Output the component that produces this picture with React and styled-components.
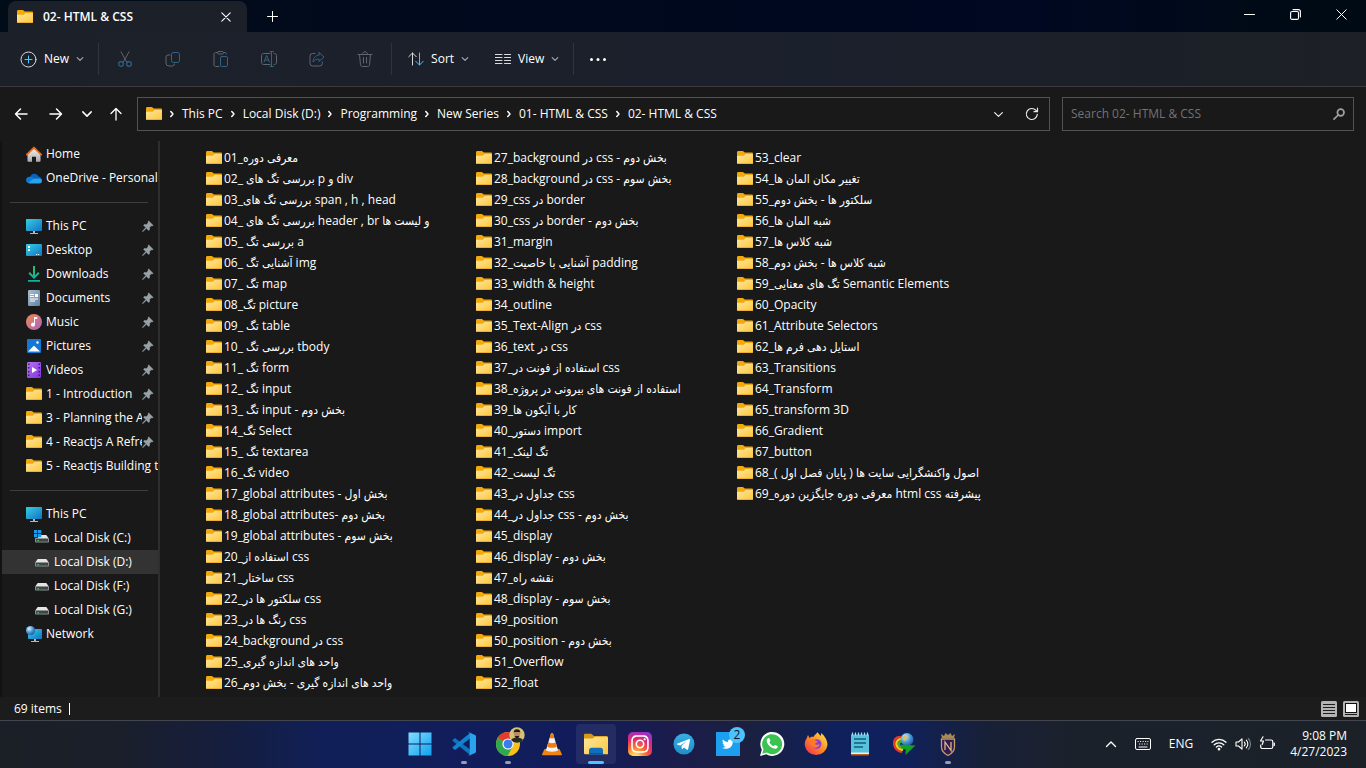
import React from 'react';
import styled, { createGlobalStyle, css } from 'styled-components';
import { FaTwitter, FaInstagram } from 'react-icons/fa';

const GlobalStyle = createGlobalStyle`
  *, *::before, *::after { box-sizing: border-box; }
  body {
    margin: 0;
    background: #191919;
    color: #ffffff;
    font-family: 'Open Sans', 'Noto Sans', 'DejaVu Sans Condensed', 'DejaVu Sans', sans-serif;
    font-size: 12px;
    line-height: 16px;
  }
  button, input { font: inherit; color: inherit; }
  svg { display: block; flex: none; }
`;

/* ---------- layout ---------- */

const Desktop = styled.div`
  display: flex;
  flex-direction: column;
  height: 100vh;
  min-height: 640px;
  overflow: hidden;
`;

const plainButton = css`
  display: flex;
  align-items: center;
  border: 0;
  padding: 0;
  background: none;
  cursor: default;
`;

const TitleBar = styled.header`
  display: flex;
  flex: none;
  height: 32px;
  padding-left: 8px;
  background: linear-gradient(90deg, #000c18 0%, #000a1c 25%, #00081f 55%, #000822 75%, #000a18 90%, #000a14 100%);
`;

const Tab = styled.div`
  display: flex;
  align-items: center;
  width: 239px;
  margin-top: 1px;
  padding: 0 16px 0 9px;
  border-radius: 8px 8px 0 0;
  background: #1c2129;
`;

const TabTitle = styled.span`
  flex: 1;
  margin-left: 10px;
  font-weight: 600;
`;

const IconButton = styled.button`
  ${plainButton}
  justify-content: center;
  width: ${(p) => p.$w || 40}px;
  height: ${(p) => p.$h || 32}px;
  flex: none;
`;

const CaptionButtons = styled.div`
  display: flex;
  margin-left: auto;
  padding-right: 2px;
`;

const Toolbar = styled.div`
  display: flex;
  flex: none;
  align-items: center;
  height: 55px;
  border-bottom: 1px solid #3b393d;
  background: linear-gradient(90deg, #1c2129 0%, #1b202b 35%, #1b202d 60%, #1b2029 80%, #1d2026 100%);
`;

const ToolGroup = styled.div`
  display: flex;
  align-items: center;
  gap: ${(p) => p.$gap || 0}px;
  padding: ${(p) => p.$pad};
  height: 32px;
  border-right: ${(p) => (p.$last ? '0' : '1px solid #30343b')};
`;

const ToolButton = styled.button`
  ${plainButton}
  gap: 7px;
  height: 32px;
  font-weight: 500;
`;

const NavRow = styled.div`
  display: flex;
  flex: none;
  align-items: center;
  height: 54px;
  padding: 0 12px 0 4px;
`;

const AddressBox = styled.div`
  display: flex;
  flex: 1;
  align-items: center;
  min-width: 0;
  height: 34px;
  margin: 0 12px 0 5px;
  padding-left: 8px;
  border: 1px solid #535353;
`;

const Crumbs = styled.nav`
  display: flex;
  flex: 1;
  align-items: center;
  min-width: 0;
  overflow: hidden;
  white-space: nowrap;
`;

const CrumbButton = styled.button`
  ${plainButton}
  flex: none;
`;

const CrumbArrow = styled.span`
  display: flex;
  flex: none;
  justify-content: center;
  width: 20px;
`;

const SearchBox = styled.label`
  display: flex;
  align-items: center;
  width: 292px;
  height: 34px;
  padding: 0 7px 0 8px;
  border: 1px solid #535353;
`;

const SearchInput = styled.input`
  flex: 1;
  min-width: 0;
  padding: 0;
  border: 0;
  outline: 0;
  background: none;
  &::placeholder { color: #737373; opacity: 1; }
`;

const Body = styled.div`
  display: flex;
  flex: 1;
  min-height: 0;
`;

const Sidebar = styled.nav`
  flex: none;
  width: 160px;
  padding-top: 1px;
  border-left: 2px solid #121212;
  border-right: 2px solid #2e2e2e;
  overflow: hidden;
`;

const SideLink = styled.a`
  display: flex;
  align-items: center;
  height: 24px;
  padding-left: ${(p) => (p.$nested ? 32 : 24)}px;
  color: inherit;
  text-decoration: none;
  background: ${(p) => (p.$selected ? '#333333' : 'transparent')};
`;

const SideLabel = styled.span`
  flex: 1;
  min-width: 0;
  margin-left: 4px;
  overflow: hidden;
  white-space: nowrap;
`;

const PinSlot = styled.span`
  display: flex;
  flex: none;
  width: 16px;
`;

const SideRule = styled.hr`
  height: 1px;
  margin: 12px 10px 11px 8px;
  border: 0;
  background: #3d3d3d;
`;

const FileList = styled.ul`
  display: grid;
  grid-auto-flow: column;
  grid-template-rows: repeat(26, 21px);
  grid-template-columns: 270px 261px auto;
  justify-content: start;
  flex: 1;
  margin: 0;
  padding: 6px 0 0 46px;
  list-style: none;
  overflow: hidden;
`;

const FileLink = styled.a`
  display: flex;
  align-items: center;
  gap: 2px;
  height: 21px;
  color: inherit;
  text-decoration: none;
  white-space: nowrap;
`;

const StatusBar = styled.footer`
  display: flex;
  flex: none;
  align-items: center;
  height: 23px;
  padding: 0 4px 0 14px;
  background: #1c1c1c;
`;

const StatusText = styled.span`
  padding-right: 7px;
`;

const StatusMark = styled.span`
  width: 1px;
  height: 12px;
  margin-right: auto;
  background: #ffffff;
`;

const Taskbar = styled.div`
  display: grid;
  flex: none;
  grid-template-columns: 1fr auto 1fr;
  align-items: center;
  height: 48px;
  padding: 0 0 2px 2px;
  border-top: 1px solid #43454f;
  background: linear-gradient(90deg, #1b2026 0%, #1a1f2b 9%, #151e40 17%, #101f58 24%, #121c5c 42%, #1b1c4c 49%, #1a2040 55%, #10205c 61%, #10205c 66%, #182038 72%, #1b212c 78%, #1c2128 100%);
`;

const Apps = styled.div`
  grid-column: 2;
  display: flex;
  gap: 4px;
`;

const AppButton = styled.button`
  ${plainButton}
  position: relative;
  justify-content: center;
  width: 40px;
  height: 40px;
  border-radius: 4px;
  background: ${(p) => (p.$state === 'active' ? 'rgba(255,255,255,0.07)' : 'none')};
  &::after {
    content: '';
    position: absolute;
    bottom: 0;
    left: 50%;
    transform: translateX(-50%);
    width: ${(p) => ({ active: 16, open: 6 })[p.$state] || 0}px;
    height: 3px;
    border-radius: 2px;
    background: ${(p) => (p.$state === 'active' ? '#4cc2ff' : '#9a9bb0')};
  }
`;

const Tile = styled.span`
  display: flex;
  align-items: center;
  justify-content: center;
  width: 24px;
  height: 24px;
  border-radius: ${(p) => p.$radius || 0}px;
  background: ${(p) => p.$bg};
  color: #ffffff;
`;

const Badge = styled.span`
  position: absolute;
  top: 3px;
  left: 21px;
  width: 16px;
  height: 16px;
  border-radius: 50%;
  background: #4cc2ff;
  color: #101820;
  text-align: center;
`;

const Tray = styled.div`
  display: flex;
  align-items: center;
  justify-content: flex-end;
  padding-right: 19px;
`;

const TrayText = styled.button`
  ${plainButton}
  justify-content: center;
  width: 40px;
  margin: 0 6px 0 2px;
`;

const Clock = styled.time`
  width: 68px;
  text-align: right;
  white-space: nowrap;
`;

/* ---------- small glyphs ---------- */

const Stroke = ({ size = 16, box = 16, color = '#fff', w = 1, children }) => (
  <svg width={size} height={size} viewBox={`0 0 ${box} ${box}`} fill="none" stroke={color} strokeWidth={w} strokeLinecap="round" strokeLinejoin="round" aria-hidden="true">
    {children}
  </svg>
);

const Caret = ({ color = '#a4a6aa', size = 8, w = 1.2 }) => (
  <Stroke size={size} box={8} color={color} w={w}><path d="M1.2 2.6 4 5.4l2.8-2.8" /></Stroke>
);

const CrumbCaret = () => (
  <Stroke size={8} box={8} w={1.5}><path d="M2.8 1.6 5 4 2.8 6.4" /></Stroke>
);

const FolderIcon = () => (
  <svg width="16" height="16" viewBox="0 0 16 16" aria-hidden="true">
    <path d="M0 2.4C0 1.6.6 1 1.3 1h4.2c.4 0 .7.1 1 .4L7.9 2.600H14.800c.7 0 1.200.5 1.200 1.200V8H0z" fill="#f3a80c" />
    <path d="M0 5.800h6.100c.4 0 .7-.1 1-.4l1.200-1.200c.2-.2.5-.3.8-.3H15c.6 0 1 .4 1 1v8c0 .7-.5 1.100-1.100 1.100H1.100C.5 14 0 13.600 0 12.900z" fill="url(#folderFront)" />
    <path d="M.1 13.200h15.800c-.2.500-.5.800-1 .8H1.100c-.5 0-.9-.3-1-.8z" fill="#e5a52c" />
  </svg>
);

const HiddenSvg = styled.svg`
  position: absolute;
  width: 0;
  height: 0;
`;

const Defs = () => (
  <HiddenSvg aria-hidden="true">
    <defs>
      <linearGradient id="folderFront" x1="0" y1="0" x2="1" y2="1"><stop offset="0" stopColor="#ffe79f" /><stop offset="1" stopColor="#fdc63a" /></linearGradient>
      <linearGradient id="screen" x1="0" y1="0" x2="1" y2="1"><stop offset="0" stopColor="#35cfe0" /><stop offset="1" stopColor="#1173c8" /></linearGradient>
      <linearGradient id="wall" x1="0" y1="0" x2="0" y2="1"><stop offset="0" stopColor="#f0f0f0" /><stop offset="1" stopColor="#a9a9a9" /></linearGradient>
      <linearGradient id="music" x1="0" y1="0" x2="1" y2="1"><stop offset="0" stopColor="#f28b4b" /><stop offset="1" stopColor="#a661c4" /></linearGradient>
      <linearGradient id="doc" x1="0" y1="0" x2="1" y2="1"><stop offset="0" stopColor="#a9bccf" /><stop offset="1" stopColor="#6583a5" /></linearGradient>
      <linearGradient id="down" x1="0" y1="0" x2="0" y2="1"><stop offset="0" stopColor="#2ebd72" /><stop offset="1" stopColor="#13ad9d" /></linearGradient>
      <linearGradient id="video" x1="0" y1="0" x2="1" y2="1"><stop offset="0" stopColor="#b773ee" /><stop offset="1" stopColor="#8133e0" /></linearGradient>
      <linearGradient id="win" x1="0" y1="0" x2="1" y2="1"><stop offset="0" stopColor="#84dcff" /><stop offset="1" stopColor="#0ea2ef" /></linearGradient>
      <linearGradient id="fox" x1="1" y1="0" x2="0" y2="1"><stop offset="0" stopColor="#fff04a" /><stop offset=".45" stopColor="#ff9028" /><stop offset="1" stopColor="#f5234f" /></linearGradient>
      <linearGradient id="tele" x1="0" y1="0" x2="0" y2="1"><stop offset="0" stopColor="#37aee2" /><stop offset="1" stopColor="#1e8fc9" /></linearGradient>
      <radialGradient id="globe" cx=".35" cy=".3" r=".8"><stop offset="0" stopColor="#d6f0ff" /><stop offset=".5" stopColor="#4c9cd8" /><stop offset="1" stopColor="#1b4b96" /></radialGradient>
    </defs>
  </HiddenSvg>
);

const Box = ({ children, size = 16, box = 16 }) => (
  <svg width={size} height={size} viewBox={`0 0 ${box} ${box}`} aria-hidden="true">{children}</svg>
);

const Monitor = () => (
  <Box>
    <rect x="0" y="1" width="16" height="12" rx=".8" fill="url(#screen)" />
    <path d="M7 13h2v2H7zM4 15h8v1H4z" fill="#aeb6bd" />
  </Box>
);

const Disk = ({ windows }) => (
  <Box>
    <path d={windows ? 'M6 5h6.300l2.500 3.500H3z' : 'M3.700 5h8.600l2.500 3.500H1.200z'} fill="#e4e4e6" />
    <rect x="1" y="8" width="14" height="4.600" rx=".8" fill="#8d8f92" />
    <rect x="2" y="9" width="12" height="2.600" fill="#414345" />
    <rect x="3.500" y="10" width="1.300" height="1.300" fill="#38e05c" />
    {windows ? <path d="M0 0h3.300v3.300H0zM4 0h3.300v3.300H4zM0 4h3.300v3.300H0zM4 4h3.300v3.300H4z" fill="#1d9bea" /> : null}
  </Box>
);

const sideIcons = {
  home: (
    <Box>
      <path d="M1.500 8 8 2.500 14.500 8v7c0 .5-.3.800-.8.800H10v-5H6v5H2.300c-.5 0-.8-.3-.8-.8z" fill="url(#wall)" />
      <path d="M.8 8.600 8 1.600l7.200 7" fill="none" stroke="#e86a1c" strokeWidth="1.900" strokeLinecap="round" strokeLinejoin="round" />
    </Box>
  ),
  cloud: (
    <Box>
      <path d="M4 7a4.600 4.600 0 0 1 8.600-.5C14.600 7 16 8.500 16 10.300L8 12 1 9z" fill="#0a63bd" />
      <path d="M3.600 6.700C5 6.500 6 7 7 7.700l4.500 3L4 13.400C1.600 13.400 0 12 0 10s1.600-3.300 3.600-3.300z" fill="#0f79d4" />
      <path d="M3 13c1.800-3.500 5.500-5.300 9.300-4.300C14.500 8.200 16 9.400 16 11s-1.200 2.500-2.800 2.500H4.200z" fill="#28a3ea" />
    </Box>
  ),
  pc: <Monitor />,
  desktop: (
    <Box>
      <rect x="0" y="2" width="16" height="12" rx="1" fill="url(#screen)" />
      <path d="M2 4h2v2H2zM2 7h2v2H2z" fill="#fff" />
      <path d="M10 12h1.200v1H10zM12 12h1.200v1H12z" fill="#e2f4ff" />
    </Box>
  ),
  downloads: (
    <Box>
      <path d="M7 0h2v9.300l3.200-3.200 1.300 1.300L8 12.900 2.500 7.400l1.300-1.300L7 9.300zM2 14h12v1.800H2z" fill="url(#down)" />
    </Box>
  ),
  documents: (
    <Box>
      <rect x="2" y="0" width="12" height="16" rx="1.200" fill="url(#doc)" />
      <path d="M4 4h4v1H4zM4 6h4v1H4zM9 4h3v3H9zM4 8.500h8v1H4zM4 10.500h5v1H4z" fill="#fff" />
    </Box>
  ),
  music: (
    <Box>
      <circle cx="8" cy="8" r="8" fill="url(#music)" />
      <path d="M8 3h3.200v2H9v5.500A2 2 0 1 1 8 8.900z" fill="#fff" />
    </Box>
  ),
  pictures: (
    <Box>
      <rect x="1" y="1" width="14" height="14" rx="1" fill="#1577d3" />
      <path d="M2 13.500 7.400 8.200c.4-.3.800-.3 1.200 0L14 13.500z" fill="#fff" />
      <circle cx="11.500" cy="4.500" r="1.200" fill="#fff" />
    </Box>
  ),
  videos: (
    <Box>
      <rect x="1" y="0" width="14" height="16" rx="1.200" fill="url(#video)" />
      <path d="M2 1.500h1.500V3H2zM2 5h1.500v1.500H2zM2 9h1.500v1.500H2zM2 12.500h1.500V14H2zM12.500 1.500H14V3h-1.500zM12.500 5H14v1.500h-1.500zM12.500 9H14v1.500h-1.500zM12.500 12.500H14V14h-1.500z" fill="#3c1d6c" />
      <path d="M6 5l5 3-5 3z" fill="#fff" />
    </Box>
  ),
  folder: <FolderIcon />,
  cdisk: <Disk windows />,
  disk: <Disk />,
  network: (
    <Box>
      <rect x="2" y="3" width="14" height="10" rx=".8" fill="url(#screen)" />
      <path d="M8 13h2v2H8zM5 15h8v1H5z" fill="#aeb6bd" />
      <circle cx="4.500" cy="4.500" r="4.500" fill="url(#globe)" />
    </Box>
  ),
};

const Pin = () => (
  <Box size={12} box={12}>
    <path d="M6.600.8 11.200 5.400 10 6 9.200 5.800 7.600 7.400 7.500 9.800 6.600 10.400 4.400 8.200 1.300 11.200.5 11.500.8 10.700 3.800 7.600 1.600 5.400 2.200 4.500 4.600 4.400 6.200 2.800 6 2z" fill="#97a0a7" stroke="#97a0a7" strokeWidth=".5" />
  </Box>
);

const DIM = '#60656e';
const DIMBLUE = '#2f6487';

const tools = [
  ['Cut', <Stroke key="i" color={DIM}><path d="M4 .8 9.800 11.200M12 .8 6.200 11.200" /><g stroke={DIMBLUE} strokeWidth="1.200"><circle cx="4" cy="13" r="2.300" /><circle cx="12" cy="13" r="2.300" /></g></Stroke>],
  ['Copy', <Stroke key="i" color={DIM}><path d="M5 4H3a2 2 0 0 0-2 2v6a3 3 0 0 0 3 3h3.500a2 2 0 0 0 2-2" /><rect x="6.500" y="1.500" width="8" height="10" rx="2" stroke={DIMBLUE} /></Stroke>],
  ['Paste', <Stroke key="i" color={DIM}><path d="M4.500 1.500h-2c-.8 0-1.500.7-1.500 1.500v11c0 .8.700 1.500 1.500 1.500H6M11 1.500h1c.8 0 1.500.7 1.500 1.500" /><rect x="4.500" y=".5" width="6" height="2.500" rx="1.200" /><rect x="7.500" y="5.500" width="7" height="10" rx="1.300" stroke={DIMBLUE} /></Stroke>],
  ['Rename', <Stroke key="i" color={DIM}><path d="M9 2.500H2.500C1.400 2.500.5 3.400.5 4.500v7c0 1.100.9 2 2 2H9M13 2.500h.5c1.100 0 2 .9 2 2v7c0 1.100-.9 2-2 2H13" /><g stroke={DIMBLUE}><path d="M10.500 1v14M9 .5h3.500M9 15.500h3.500M3 11l2.700-6.500L8.400 11M4 9h3.400" /></g></Stroke>],
  ['Share', <Stroke key="i" color={DIM}><path d="M6 2.500H3.500A2.500 2.500 0 0 0 1 5v7.500A2.500 2.500 0 0 0 3.500 15h7.300a2.500 2.500 0 0 0 2.500-2.500V11" /><path d="M10 1.500 15 6l-5 4.500V8.200C7.400 8 5.500 8.800 4 11c.2-4 2.200-6.500 6-7z" stroke={DIMBLUE} /></Stroke>],
  ['Delete', <Stroke key="i" color={DIM}><path d="M1 3.500h14M5.500 3.300C5.500 1.800 6.500.8 8 .8s2.500 1 2.500 2.500M2.500 3.500l1 10.300c.1 1 .8 1.700 1.800 1.700h5.400c1 0 1.700-.7 1.800-1.700l1-10.300M6.500 6.500v5.500M9.500 6.500v5.500" /></Stroke>],
];

const crumbs = ['This PC', 'Local Disk (D:)', 'Programming', 'New Series', '01- HTML & CSS', '02- HTML & CSS'];

const sideGroups = [
  [['home', 'Home'], ['cloud', 'OneDrive - Personal']],
  [
    ['pc', 'This PC', 'pin'], ['desktop', 'Desktop', 'pin'], ['downloads', 'Downloads', 'pin'], ['documents', 'Documents', 'pin'],
    ['music', 'Music', 'pin'], ['pictures', 'Pictures', 'pin'], ['videos', 'Videos', 'pin'], ['folder', '1 - Introduction', 'pin'],
    ['folder', '3 - Planning the A', 'pin'], ['folder', '4 - Reactjs A Refre', 'pin'], ['folder', '5 - Reactjs Building t'],
  ],
  [
    ['pc', 'This PC'], ['cdisk', 'Local Disk (C:)', 'nested'], ['disk', 'Local Disk (D:)', 'selected'],
    ['disk', 'Local Disk (F:)', 'nested'], ['disk', 'Local Disk (G:)', 'nested'], ['network', 'Network'],
  ],
];

const files = [
  '01_معرفی دوره', '02_ بررسی تگ های p و div', '03_بررسی تگ های span , h , head', '04_ بررسی تگ های header , br و لیست ها',
  '05_ بررسی تگ a', '06_ آشنایی تگ img', '07_ تگ map', '08_تگ picture', '09_ تگ table', '10_ بررسی تگ tbody', '11_ تگ form',
  '12_ تگ input', '13_ تگ input - بخش دوم', '14_تگ Select', '15_ تگ textarea', '16_تگ video',
  '17_global attributes - بخش اول', '18_global attributes- بخش دوم', '19_global attributes - بخش سوم',
  '20_استفاده از css', '21_ساختار css', '22_سلکتور ها در css', '23_رنگ ها در css', '24_background در css',
  '25_واحد های اندازه گیری', '26_واحد های اندازه گیری - بخش دوم',
  '27_background در css - بخش دوم', '28_background در css - بخش سوم', '29_css در border', '30_css در border - بخش دوم',
  '31_margin', '32_آشنایی با خاصیت padding', '33_width & height', '34_outline', '35_Text-Align در css', '36_text در css',
  '37_استفاده از فونت در css', '38_استفاده از فونت های بیرونی در پروژه', '39_کار با آیکون ها', '40_دستور import',
  '41_تگ لینک', '42_تگ لیست', '43_جداول در css', '44_جداول در css - بخش دوم', '45_display', '46_display - بخش دوم',
  '47_نقشه راه', '48_display - بخش سوم', '49_position', '50_position - بخش دوم', '51_Overflow', '52_float',
  '53_clear', '54_تغییر مکان المان ها', '55_سلکتور ها - بخش دوم', '56_شبه المان ها', '57_شبه کلاس ها',
  '58_شبه کلاس ها - بخش دوم', '59_تگ های معنایی Semantic Elements', '60_Opacity', '61_Attribute Selectors',
  '62_استایل دهی فرم ها', '63_Transitions', '64_Transform', '65_transform 3D', '66_Gradient', '67_button',
  '68_اصول واکنشگرایی سایت ها ( پایان فصل اول )', '69_معرفی دوره جایگزین دوره html css پیشرفته',
];

/* ---------- taskbar apps ---------- */

const apps = [
  ['Start', '', <Box key="i" size={24} box={24}><path d="M.5.500h11v11H.5zM12.500.500h11v11h-11zM.5 12.500h11v11H.5zM12.500 12.500h11v11h-11z" fill="url(#win)" /></Box>],
  ['Visual Studio Code', 'open', (
    <Box key="i" size={24} box={24}>
      <path d="M1 7.500 3 6l15 11.500V23L.8 9c-.4-.5-.3-1.100.2-1.500z" fill="#0f74bd" />
      <path d="M1 16.500 3 18 18 6.500V1L.8 15c-.4.500-.3 1.100.2 1.500z" fill="#1284cf" />
      <path d="M17 .3 23 3c.6.300 1 .8 1 1.500v15c0 .7-.4 1.200-1 1.500l-6 2.700c-.6.200-.9.100-1.300-.3.800.5 2-.1 2-1.100V1.700c0-1-1.200-1.600-2-1.100.4-.4.700-.5 1.300-.3z" fill="#2aa3ee" />
    </Box>
  )],
  ['Google Chrome', 'open', (
    <Box key="i" size={34} box={34}>
      <circle cx="17" cy="17" r="12" fill="#fbc116" />
      <path d="M17 17 6.600 11A12 12 0 0 1 27.400 11z" fill="#e33b2e" />
      <path d="M17 17 6.600 11A12 12 0 0 0 16.500 29l5-9z" fill="#2da94f" />
      <circle cx="17" cy="17" r="5.600" fill="#fff" /><circle cx="17" cy="17" r="4.500" fill="#3a7ded" />
      <circle cx="26" cy="8" r="7.700" fill="#d5c276" />
      <path d="M20 13c1-1.700 3-2.300 6-2.300s5 .6 6 2.300a7.700 7.700 0 0 1-12 0z" fill="#2b2c20" />
      <ellipse cx="26" cy="7.500" rx="2.900" ry="3.800" fill="#b98b63" />
      <path d="M22.800 6.500C22.500 3.500 23.500 2.300 26 2.300s3.500 1.200 3.200 4.200L28.500 5h-5zM23.700 9h4.600L27 11.600h-2z" fill="#231b15" />
    </Box>
  )],
  ['VLC media player', '', (
    <Box key="i" size={24} box={24}>
      <path d="M4.500 17h15l2.300 5c.3.800-.1 1.300-.8 1.300H3c-.7 0-1.100-.5-.8-1.300z" fill="#f08313" />
      <path d="M11 1.500c.3-.8 1.700-.8 2 0L18 18c-1 2.200-11 2.200-12 0z" fill="#f4f4f4" />
      <path d="M11 1.500c.3-.8 1.700-.8 2 0l1.300 4.300c-1 .8-3.600.8-4.600 0zM8.400 10.300c1.800 1.200 5.400 1.200 7.200 0L17 14.500c-2.300 1.800-7.700 1.800-10 0z" fill="#f27a10" />
    </Box>
  )],
  ['File Explorer', 'active', (
    <Box key="i" size={24} box={24}>
      <path d="M0 3c0-.8.500-1.300 1.300-1.300h6L10 4h12.500c.8 0 1.500.6 1.500 1.500V10H0z" fill="#d99a13" />
      <path d="M0 6.500h8.500L11 4.800h11.500c.8 0 1.500.6 1.500 1.500v16H1.500C.7 22.300 0 21.700 0 21z" fill="url(#folderFront)" />
      <path d="M5 22.500v-4c0-1.800 1-2.800 2.800-2.800h8.700c1.700 0 2.500 1 2.500 2.800v4z" fill="#126fc0" />
      <path d="M5 22.500v-1.500h14v1.500z" fill="#0b559c" />
    </Box>
  )],
  ['Instagram', '', <Tile key="i" $radius={5} $bg="radial-gradient(circle at 30% 105%, #ffd95a 10%, #f9732f 35%, #e12c72 60%, #a12fc0 85%, #6549d0 100%)"><FaInstagram size={20} /></Tile>],
  ['Telegram', '', (
    <Box key="i" size={22} box={22}>
      <circle cx="11" cy="11" r="10.500" fill="url(#tele)" />
      <path d="M4 10.800 16.200 6c.6-.2 1 .2.900.8l-2 9.400c-.2.700-.6.800-1.100.5l-3-2.300-1.500 1.500c-.4.300-.7.200-.7-.3l-.3-2.800L14 8l-6.800 4.400-3-.9c-.6-.2-.6-.5-.2-.7z" fill="#fff" />
    </Box>
  )],
  ['Twitter', '', <React.Fragment key="i"><Tile $bg="#1d9ff0"><FaTwitter size={12} /></Tile><Badge>2</Badge></React.Fragment>],
  ['WhatsApp', '', (
    <Box key="i" size={26} box={26}>
      <path d="M1 25l1.800-6.300A12 12 0 1 1 7.300 23.300z" fill="#fff" />
      <path d="M3.200 22.800l1.300-4.500A10 10 0 1 1 7.700 21.600z" fill="#3ac351" />
      <path d="M9 7.300c.4-.4 1.200-.4 1.400.1l.9 2.100c.2.600-.7 1.200-.9 1.700.8 1.800 2.200 3.100 4.100 3.900.6-.3 1.100-1.400 1.700-1.200l2.200 1.100c.6.300.2 1.500-.2 2-2.500 2.600-10.500-2.600-10.500-7.300 0-1 .7-1.900 1.300-2.400z" fill="#fff" />
    </Box>
  )],
  ['Firefox', '', (
    <Box key="i" size={24} box={24}>
      <path d="M2.600 6.500 4 3l1.500 3C7 4.800 8 4.600 9.500 5 10 3.500 12 2 13.700.3c.8 1.500 1.800 2.500 3.300 3.700 0-1.200 0-2 .3-3 3.500 3 6.200 7.500 6.200 12A11.500 11.500 0 0 1 .7 13c0-2.700.7-4.800 1.900-6.500z" fill="url(#fox)" />
      <circle cx="12.600" cy="12" r="4.800" fill="#8b3fd8" />
      <path d="M7 8c1.500-.8 3.800-.5 4.800.8 1.500.1 2 .6 1.800 1.200-.8.700-2.300.7-2.500 1.900 1 1.400 3.200.9 4.400.2.200 2.200-2 3.900-4.500 3.600-3.300-.4-5-4.300-4-7.700z" fill="#ff7b24" />
    </Box>
  )],
  ['Notepad', '', (
    <Box key="i" size={24} box={24}>
      <path d="M3 2.500h18V21H3z" fill="#56c2dc" />
      <path d="M3 21h18v1.500c0 .6-.4 1-1 1H4c-.6 0-1-.4-1-1z" fill="#b85f26" />
      <path d="M3 20.500h18V22H3z" fill="#e8eef0" />
      <path d="M6 7h12M6 11h12M6 15h9" stroke="#11607d" strokeWidth="1.500" />
      <path d="M4.500.500v3M7.500.500v3M10.500.500v3M13.500.500v3M16.500.500v3M19.500.500v3" stroke="#a3e2f0" strokeWidth="1.200" />
    </Box>
  )],
  ['Internet Download Manager', '', (
    <Box key="i" size={24} box={24}>
      <g fill="none" strokeWidth="2.400"><path d="M9 5C3.500 5 1.500 8 2.200 12.500S6 19 10 20" stroke="#e63a25" /><path d="M10 7C6 7 4 9.500 4.500 12.500s3 4.700 6.500 5.500" stroke="#f6c325" /><path d="M11 9C8 9 6.500 10.500 7 12.800s2 3 5 3.200" stroke="#3fae35" /></g>
      <circle cx="15" cy="7.500" r="6.500" fill="url(#globe)" />
      <path d="M11 4.500c2-1.500 3.500-1 4 .5s-1.500 2-2 3.500-2 0-2-4z" fill="#d9c35c" />
      <path d="M9 12.500 23.500 13.500 13.500 23l.3-5.500L9 16z" fill="#16a01f" />
    </Box>
  )],
  ['N Shield', 'open', (
    <Box key="i" size={24} box={24}>
      <path d="M6 6 5 2l3 2 1.500-3L12 3l2.500-2L16 4l3-2-1 4z" fill="#a98a50" />
      <path d="M5.500 7h13v8c0 4-3.500 7-6.500 8.500C9 22 5.500 19 5.500 15z" fill="#331a55" stroke="#c19b62" strokeWidth="1.300" />
      <path d="M9 18V10l6 8.500V10" fill="none" stroke="#d8ba84" strokeWidth="1.300" />
    </Box>
  )],
];

export default function App() {
  return (
    <Desktop>
      <GlobalStyle />
      <Defs />
      <TitleBar>
        <Tab>
          <FolderIcon />
          <TabTitle>02- HTML &amp; CSS</TabTitle>
          <IconButton $w={10} aria-label="Close tab"><Stroke size={10} box={10} w={1.1}><path d="M.8.800l8.400 8.400M9.200.800.8 9.200" /></Stroke></IconButton>
        </Tab>
        <IconButton $w={50} aria-label="New tab"><Stroke size={11} box={11}><path d="M5.500.500v10M.500 5.500h10" /></Stroke></IconButton>
        <CaptionButtons>
          <IconButton $w={46} $h={29} aria-label="Minimize"><Stroke size={11} box={11}><path d="M.500 5.500h10" /></Stroke></IconButton>
          <IconButton $w={46} $h={29} aria-label="Restore"><Stroke size={11} box={11} w={1.1}><rect x=".6" y="2.500" width="7.900" height="7.900" rx="1.500" /><path d="M3 .6h5.400c1.200 0 2 .9 2 2V8" /></Stroke></IconButton>
          <IconButton $w={46} $h={29} aria-label="Close"><Stroke size={11} box={11}><path d="M.800.800l9.400 9.400M10.200.800.800 10.200" /></Stroke></IconButton>
        </CaptionButtons>
      </TitleBar>

      <Toolbar>
        <ToolGroup $pad="0 14px 0 20px">
          <ToolButton>
            <Stroke size={17} box={17} color="#d8d9db"><circle cx="8.500" cy="8.500" r="7.500" /><path d="M8.500 5v7M5 8.500h7" stroke="#4cc2ff" /></Stroke>
            <span>New</span>
            <Caret />
          </ToolButton>
        </ToolGroup>
        <ToolGroup $pad="0 6px" $gap={8}>
          {tools.map(([name, icon]) => <IconButton key={name} aria-label={name} disabled>{icon}</IconButton>)}
        </ToolGroup>
        <ToolGroup $pad="0 14px 0 16px" $gap={26}>
          <ToolButton>
            <Stroke color="#d8d9db"><path d="M4.500 14V2M.8 5.700 4.500 2l3.700 3.700" /><path d="M11.500 2v12M7.800 10.300l3.700 3.700 3.700-3.700" stroke="#4cc2ff" /></Stroke>
            <span>Sort</span>
            <Caret />
          </ToolButton>
          <ToolButton>
            <Stroke color="#d8d9db"><path d="M0 3.500h7M0 6.500h7M0 9.500h7M0 12.500h7M9.500 3.500h6.500M9.500 6.500h6.500M9.500 9.500h6.500M9.500 12.500h6.500" /></Stroke>
            <span>View</span>
            <Caret />
          </ToolButton>
        </ToolGroup>
        <ToolGroup $pad="0 4px" $last>
          <IconButton aria-label="See more"><Box size={18} box={18}><g fill="#fff"><circle cx="2.500" cy="9.500" r="1.500" /><circle cx="9" cy="9.500" r="1.500" /><circle cx="15.500" cy="9.500" r="1.500" /></g></Box></IconButton>
        </ToolGroup>
      </Toolbar>

      <NavRow>
        <IconButton $w={34} aria-label="Back"><Stroke size={14} box={14} w={1.5}><path d="M13 7H1.500M6.500 2l-5 5 5 5" /></Stroke></IconButton>
        <IconButton $w={36} aria-label="Forward"><Stroke size={14} box={14} w={1.5}><path d="M1 7h11.500M7.500 2l5 5-5 5" /></Stroke></IconButton>
        <IconButton $w={26} aria-label="Recent locations"><Caret color="#fff" size={12} w={1} /></IconButton>
        <IconButton $w={32} aria-label="Up"><Stroke size={14} box={14} w={1.3}><path d="M7 13V1.500M2 6.500l5-5 5 5" /></Stroke></IconButton>
        <AddressBox>
          <FolderIcon />
          <Crumbs aria-label="Address">
            {crumbs.map((name) => (
              <React.Fragment key={name}>
                <CrumbArrow><CrumbCaret /></CrumbArrow>
                <CrumbButton>{name}</CrumbButton>
              </React.Fragment>
            ))}
          </Crumbs>
          <IconButton $w={34} aria-label="Previous locations"><Caret color="#e8e8e8" size={11} w={0.9} /></IconButton>
          <IconButton $w={34} aria-label="Refresh"><Stroke size={14} box={14} w={1.2} color="#e8e8e8"><path d="M12.300 7.300A5.500 5.500 0 1 1 10.800 3.200L12.300 4.500M12.500 1.200v3.500H9" /></Stroke></IconButton>
        </AddressBox>
        <SearchBox>
          <SearchInput type="text" placeholder="Search 02- HTML &amp; CSS" aria-label="Search 02- HTML &amp; CSS" />
          <Stroke size={14} box={14} w={1.7} color="#a0a0a0"><circle cx="8.700" cy="5.500" r="3.300" /><path d="M6.200 8 2 12.200" /></Stroke>
        </SearchBox>
      </NavRow>

      <Body>
        <Sidebar aria-label="Navigation pane">
          {sideGroups.map((group, g) => (
            <React.Fragment key={g}>
              {g > 0 ? <SideRule /> : null}
              {group.map(([icon, label, mode]) => (
                <SideLink key={label} href="#" $nested={mode === 'nested' || mode === 'selected'} $selected={mode === 'selected'}>
                  {sideIcons[icon]}
                  <SideLabel>{label}</SideLabel>
                  {mode === 'pin' ? <PinSlot><Pin /></PinSlot> : null}
                </SideLink>
              ))}
            </React.Fragment>
          ))}
        </Sidebar>
        <FileList>
          {files.map((name) => (
            <li key={name}><FileLink href="#"><FolderIcon /><span>{name}</span></FileLink></li>
          ))}
        </FileList>
      </Body>

      <StatusBar>
        <StatusText>69 items</StatusText>
        <StatusMark />
        <IconButton $w={22} $h={22} aria-label="Details view"><Box><rect x="0" y="0" width="16" height="16" rx="1.500" fill="#b4b4b4" /><path d="M2 3.500h12M2 6.500h12M2 9.500h12M2 12.500h12" stroke="#1c1c1c" /></Box></IconButton>
        <IconButton $w={22} $h={22} aria-label="Large icons view"><Box><rect x="0" y="0" width="16" height="16" rx="1.500" fill="#b4b4b4" /><rect x="2.500" y="2.500" width="11" height="9" fill="#fff" stroke="#111" /><path d="M2 13.500h12" stroke="#1c1c1c" /></Box></IconButton>
      </StatusBar>

      <Taskbar>
        <Apps>
          {apps.map(([name, state, icon]) => <AppButton key={name} aria-label={name} $state={state}>{icon}</AppButton>)}
        </Apps>
        <Tray>
          <IconButton $w={32} aria-label="Show hidden icons"><Stroke size={12} box={12} w={1.4}><path d="M1.500 8.500 6 4l4.500 4.500" /></Stroke></IconButton>
          <IconButton $w={32} aria-label="Touch keyboard"><Stroke><rect x=".5" y="2.500" width="15" height="11" rx="1.500" /><path d="M3 5.500h.3M5.500 5.500h.3M8 5.500h.3M10.500 5.500h.3M12.800 5.500h.2M4.500 8h.3M7 8h.3M9.500 8h.3M12 8h.3M4 11h8" /></Stroke></IconButton>
          <TrayText>ENG</TrayText>
          <IconButton $w={24} aria-label="Wi-Fi"><Stroke w={1.3}><path d="M1 6.300a10 10 0 0 1 14 0M3.200 8.700a7 7 0 0 1 9.600 0M5.400 11a4 4 0 0 1 5.200 0" /><circle cx="8" cy="13.200" r=".7" fill="#fff" /></Stroke></IconButton>
          <IconButton $w={24} aria-label="Volume"><Stroke w={1.1}><path d="M1 6v4h2.500L7 13.200V2.800L3.500 6zM9.300 6a3 3 0 0 1 0 4M11.300 4.200a5.500 5.500 0 0 1 0 7.600" /><path d="M13.300 2.500a8 8 0 0 1 0 11" stroke="#777b85" /></Stroke></IconButton>
          <IconButton $w={24} aria-label="Battery"><Stroke w={1.2}><path d="M6.500 4H12c1 0 1.800.8 1.800 1.800v4.900c0 1-.8 1.800-1.800 1.800H3.500c-1 0-1.800-.8-1.800-1.800V9M15.300 7v2.500M4 .800 1.500 5h3L3.200 8.500" /></Stroke></IconButton>
          <Clock dateTime="2023-04-27T21:08">9:08 PM<br />4/27/2023</Clock>
        </Tray>
      </Taskbar>
    </Desktop>
  );
}
